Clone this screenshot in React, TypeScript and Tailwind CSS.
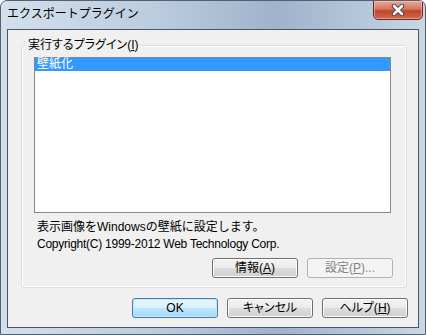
const font = "font-['Liberation_Sans','Noto_Sans_CJK_JP',sans-serif]";

function Btn({
  children,
  kind = 'normal',
}: {
  children: React.ReactNode;
  kind?: 'normal' | 'default' | 'disabled';
}) {
  const look =
    kind === 'default'
      ? 'border-[#3c7fb1] bg-[linear-gradient(to_bottom,#eaf6fd_0%,#d9f0fc_50%,#bee6fd_50%,#a7d9f5_100%)] shadow-[inset_0_0_0_1px_#c4e5f6] text-black'
      : kind === 'disabled'
        ? 'border-[#adb2b5] bg-[#f4f4f4] text-[#838383]'
        : 'border-[#707070] bg-[linear-gradient(to_bottom,#f2f2f2_0%,#ebebeb_50%,#dddddd_50%,#cfcfcf_100%)] shadow-[inset_0_0_0_1px_#fcfcfc] text-black';
  return (
    <div
      className={`flex h-[20px] w-[86px] items-center justify-center rounded-[3px] border text-[12px] leading-none [font-feature-settings:'palt'] ${look}`}
    >
      {children}
    </div>
  );
}

function CloseGlyph() {
  return (
    <svg width="14" height="12" viewBox="0 0 14 12">
      <path d="M3 2 L11 10 M11 2 L3 10" stroke="#3b3b3b" strokeWidth="4.5" strokeLinecap="round" />
      <path d="M3 2 L11 10 M11 2 L3 10" stroke="#ffffff" strokeWidth="2.6" strokeLinecap="round" />
    </svg>
  );
}

export default function App() {
  return (
    <div
      className={`relative flex h-[335px] w-[426px] flex-col overflow-hidden rounded-t-[7px] border border-[#55606e] bg-[linear-gradient(to_right,#d3dfec_0%,#bccde0_35%,#9fb3cb_65%,#b4c6da_85%,#c9d6e5_100%)] px-[6px] pb-[6px] text-black ${font}`}
    >
      {/* title bar */}
      <div className="flex h-[28px] items-start pt-[5px] text-[12px] leading-[16px]">
        エクスポートプラグイン
      </div>

      <div className="absolute left-[372px] top-[-1px] flex h-[20px] w-[50px] items-center justify-center rounded-b-[5px] border border-[#6a2a22] bg-[linear-gradient(to_bottom,#e8a99a_0%,#d47560_45%,#c2432d_55%,#cf6a4d_100%)] shadow-[inset_0_0_0_1px_rgba(255,220,210,0.45)]">
        <CloseGlyph />
      </div>

      {/* client area */}
      <div className="flex flex-1 flex-col border border-[#4a5664] bg-[#f0f0f0] px-[13px] pt-[15px] text-[12px]">
        <div className="relative flex h-[243px] w-[386px] flex-col rounded-[3px] border border-[#d5dfe5] shadow-[inset_0_0_0_1px_#ffffff] px-[12px] pt-[11px] pb-[9px]">
          <span className="absolute left-[4px] top-[-8px] bg-[#f0f0f0] px-[2px] leading-[14px] [font-feature-settings:'palt']">
            実行するプラグイン(<u>I</u>)
          </span>

          <div className="h-[156px] w-[357px] border border-[#828790] bg-white">
            <div className="h-[13px] bg-[#3399ff] pl-[2px] leading-[13px] text-white">壁紙化</div>
          </div>

          <div className="mt-[6px] pl-[3px] leading-[17px]">
            <div>表示画像をWindowsの壁紙に設定します。</div>
            <div className="tracking-[-0.25px]">Copyright(C) 1999-2012 Web Technology Corp.</div>
          </div>

          <div className="mt-[5px] flex justify-end gap-[9px] pr-[1px]">
            <Btn>
              情報(<u>A</u>)
            </Btn>
            <Btn kind="disabled">
              設定(<u>P</u>)...
            </Btn>
          </div>
        </div>

        <div className="-mr-[3px] mt-[10px] flex justify-end gap-[9px]">
          <Btn kind="default">OK</Btn>
          <Btn>キャンセル</Btn>
          <Btn>
            ヘルプ(<u>H</u>)
          </Btn>
        </div>
      </div>
    </div>
  );
}
